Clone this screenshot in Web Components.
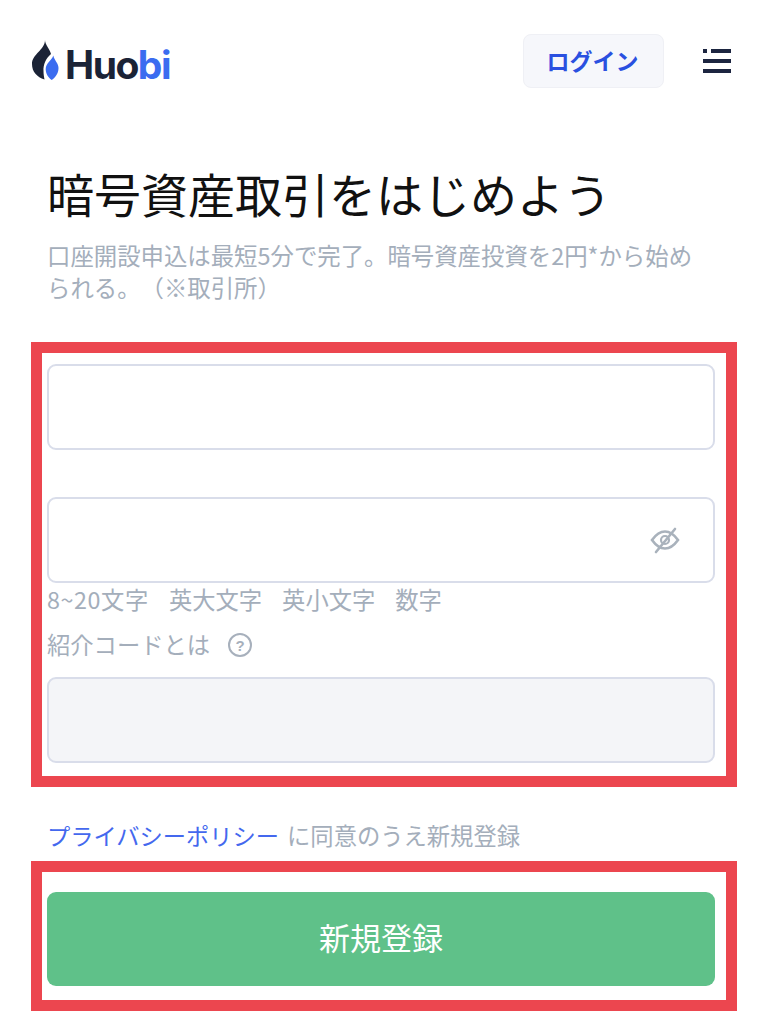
<!DOCTYPE html>
<html lang="ja"><head><meta charset="utf-8"><title>Huobi</title>
<style>
html,body{margin:0;padding:0;background:#fff}
body{width:762px;height:1024px;overflow:hidden;font-family:"Noto Sans CJK JP","Noto Sans",sans-serif;text-spacing-trim:space-all}
</style></head><body>
<hb-signup></hb-signup>
<script>
function def(name, html, init){
  customElements.define(name, class extends HTMLElement{
    constructor(){super();this.attachShadow({mode:'open'}).innerHTML=html;}
    connectedCallback(){ if(init) init(this); }
  });
}
def('hb-logo',`<style>
:host{display:flex;align-items:flex-start;height:41px;margin-top:6px}
svg{display:block;flex:none}
span{font:700 39px/1 Inter,sans-serif;color:#1b2336;margin-left:6px;margin-top:5px;letter-spacing:-1.500px}
b{font-weight:700;color:#3b6cf0}
</style>
<svg width="27" height="41" viewBox="0 0 27 41">
<path fill="#1b2336" d="M13 0C13 5 18 9 19 14C14 18 11 25 11.500 31C11.500 34 12 37 12.500 39.500C5 37 0 32 0 24C0 14 13 10 13 0Z"/>
<path fill="#3b6cf0" d="M21.300 15.500C22.500 21 26.500 23 26.500 28C26.500 34 22.500 38 19.700 40C16 37.500 13.700 33.500 13.700 29C13.700 23 19.500 21 21.300 15.500Z"/>
</svg><span>Huo<b>bi</b></span>`);
def('hb-login',`<style>
:host{display:flex;align-items:center;justify-content:center;width:141px;height:54px;box-sizing:border-box;border:1px solid #eff0f5;border-radius:8px;background:#f6f7fb;color:#2a50e0;font-size:23px;font-weight:700;padding:0 2px 2px 0}
</style><slot></slot>`);
def('hb-menu',`<style>:host{display:block;width:28px;height:26px}svg{display:block}</style>
<svg width="28" height="26" viewBox="0 0 28 26" fill="#1c2540"><rect x="0" y="1" width="4" height="4"/><rect x="8" y="1" width="20" height="4"/><rect x="0" y="11" width="28" height="4"/><rect x="0" y="21" width="28" height="4"/></svg>`);
def('hb-header',`<style>
:host{display:flex;align-items:flex-start;padding:34px 31px 0 32px}
.sp{flex:1}
hb-menu{margin:14px 0 0 39px}
</style><hb-logo></hb-logo><div class="sp"></div><hb-login>ログイン</hb-login><hb-menu></hb-menu>`);
def('hb-intro',`<style>
:host{display:block;padding:0 54px 0 48px}
h1{margin:75px 0 0;font-size:47px;line-height:60px;font-weight:400;color:#111;white-space:nowrap;margin-left:-1px}
p{margin:16px 0 0 -1px;font-size:23.400px;line-height:32px;color:#a4aebb}
</style><h1><slot name="title"></slot></h1><p><slot></slot></p>`);
def('hb-box',`<style>
:host{display:block;margin-left:31px;width:706px;box-sizing:border-box;border:11px solid #ec464f}
</style><slot></slot>`);
def('hb-input',`<style>
:host{display:flex;align-items:center;justify-content:flex-end;box-sizing:border-box;width:668px;height:86px;border:2px solid #d9ddea;border-radius:9px;background:#fff;padding-right:33px}
:host([disabled]){background:#f4f5f8}
</style><slot></slot>`);
def('hb-eye',`<style>:host{display:block;width:30px;height:28px}svg{display:block}</style>
<svg width="30" height="28" viewBox="0 0 30 28" fill="none" stroke="#a9b2bc" stroke-width="2.600" stroke-linecap="round"><path d="M2 14C7 7 11 5.500 15 5.500S23 7 28 14C23 21 19 22.500 15 22.500S7 21 2 14Z"/><circle cx="15" cy="14" r="4" stroke-width="2.200"/><path d="M6 26L25 3"/></svg>`);
def('hb-help',`<style>
:host{display:inline-flex;align-items:center;justify-content:center;box-sizing:border-box;width:24px;height:24px;border:2px solid #a7b0bc;border-radius:50%;color:#a7b0bc;font:700 15px/1 "Liberation Sans",sans-serif}
</style>?`);
def('hb-form',`<style>
:host{display:block;padding:11px 5px 13px;color:#a4aebb;font-size:23.300px}
.hint{display:flex;gap:20px;height:36px;line-height:33px;margin-top:0;white-space:nowrap}
.hint .n{letter-spacing:.6px}
.label{display:flex;align-items:center;gap:18px;height:40px;margin:6px 0 12px}
.label span{padding-bottom:2px}
hb-input.first{margin-bottom:47px}
</style>
<hb-input class="first"></hb-input>
<hb-input><hb-eye></hb-eye></hb-input>
<div class="hint"><span class="n">8~20文字</span><span>英大文字</span><span>英小文字</span><span>数字</span></div>
<div class="label"><span>紹介コードとは</span><hb-help></hb-help></div>
<hb-input disabled></hb-input>`);
def('hb-agree',`<style>
:host{display:flex;gap:8px;padding:0 48px 0 47px;margin-top:32px;height:42px;line-height:32px;font-size:23.300px;color:#a4aebb;white-space:nowrap}
a{color:#4468ee;text-decoration:none;font-size:23.250px}
</style><a href="#">プライバシーポリシー</a><span>に同意のうえ新規登録</span>`);
def('hb-submit',`<style>
:host{display:flex;align-items:center;justify-content:center;box-sizing:border-box;padding-bottom:6px;width:668px;height:94px;background:#5fc189;color:#fff;border-radius:9px;font-size:31px}
</style><slot></slot>`);
def('hb-signup',`<style>
:host{display:block}
.sub{padding:20px 5px 14px}
</style>
<hb-header></hb-header>
<hb-intro><span slot="title">暗号資産取引をはじめよう</span>口座開設申込は最短5分で完了。暗号資産投資を2円*から始められる。（※取引所）</hb-intro>
<hb-box style="margin-top:39px"><hb-form></hb-form></hb-box>
<hb-agree></hb-agree>
<hb-box><div class="sub"><hb-submit>新規登録</hb-submit></div></hb-box>`);
</script>
</body></html>
